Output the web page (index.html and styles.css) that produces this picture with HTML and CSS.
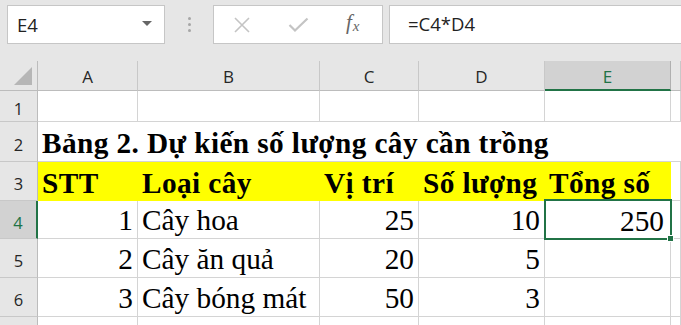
FILE: index.html
```html
<!DOCTYPE html>
<html>
<head>
    <meta http-equiv="Content-Type" content="text/html; charset=utf-8" />
    <title>Bảng 2</title>
    <link rel="stylesheet" href="styles.css">
</head>
<body>
<div class="fbar">
    <div class="namebox">
        <span class="name">E4</span>
        <span class="drop"></span>
    </div>
    <div class="dots"><i></i><i></i><i></i></div>
    <div class="btns">
        <svg class="ico" width="18" height="16" viewBox="0 0 18 16"><path d="M2 1L16 15M16 1L2 15" stroke="#c4c4c4" stroke-width="1.6" fill="none"/></svg>
        <svg class="ico" width="21" height="16" viewBox="0 0 21 16"><path d="M1.5 8L7 13.5L19.5 1.5" stroke="#c4c4c4" stroke-width="2.2" fill="none"/></svg>
        <span class="fx">f<sub>x</sub></span>
    </div>
    <div class="formula">=C4*D4</div>
</div>

<div class="sheet">
    <div class="corner"><span class="tri"></span></div>
    <div class="colh">A</div>
    <div class="colh">B</div>
    <div class="colh">C</div>
    <div class="colh">D</div>
    <div class="colh sel">E</div>
    <div class="colh"></div>

    <div class="rowh">1</div>
    <div class="c"></div><div class="c"></div><div class="c"></div><div class="c"></div><div class="c"></div><div class="c"></div>

    <div class="rowh">2</div>
    <div class="c title">Bảng 2. Dự kiến số lượng cây cần trồng</div>

    <div class="rowh">3</div>
    <div class="c y">STT</div>
    <div class="c y">Loại cây</div>
    <div class="c y">Vị trí</div>
    <div class="c y">Số lượng</div>
    <div class="c y">Tổng số</div>
    <div class="c"></div>

    <div class="rowh sel">4</div>
    <div class="c n">1</div>
    <div class="c">Cây hoa</div>
    <div class="c n">25</div>
    <div class="c n">10</div>
    <div class="c n active">250<span class="handle"></span></div>
    <div class="c"></div>

    <div class="rowh">5</div>
    <div class="c n">2</div>
    <div class="c">Cây ăn quả</div>
    <div class="c n">20</div>
    <div class="c n">5</div>
    <div class="c"></div>
    <div class="c"></div>

    <div class="rowh">6</div>
    <div class="c n">3</div>
    <div class="c">Cây bóng mát</div>
    <div class="c n">50</div>
    <div class="c n">3</div>
    <div class="c"></div>
    <div class="c"></div>

    <div class="rowh"></div>
    <div class="c"></div><div class="c"></div><div class="c"></div><div class="c"></div><div class="c"></div><div class="c"></div>
</div>
</body>
</html>
```

FILE: styles.css
```css
*{margin:0;padding:0;box-sizing:border-box;}
body{background:#e6e6e6;width:681px;height:325px;overflow:hidden;font-family:"Segoe UI","Open Sans","Liberation Sans",Arial,sans-serif;}

.fbar{
    height:61px;
    display:flex;
    align-items:flex-start;
    padding:5px 0 0 7px;
}
.namebox{
    width:158px;
    height:39px;
    background:#fff;
    border:1px solid #c6c6c6;
    display:flex;
    align-items:center;
    justify-content:space-between;
    padding:0 12px 0 9px;
}
.name{font-size:18.5px;color:#222;}
.drop{
    width:0;height:0;
    border-left:5px solid transparent;
    border-right:5px solid transparent;
    border-top:5px solid #666;
    margin-top:-3px;
}
.dots{
    width:48px;
    height:39px;
    display:flex;
    flex-direction:column;
    align-items:center;
    justify-content:center;
    gap:3px;
}
.dots i{display:block;width:3px;height:3px;border-radius:50%;background:#a6a6a6;}
.btns{
    width:170px;
    height:39px;
    background:#fff;
    border:1px solid #c6c6c6;
    display:flex;
    align-items:center;
    padding-left:19px;
}
.btns .ico{margin-right:37px;}
.btns .ico + .ico{margin-right:37px;}
.fx{
    font:italic 21px "Liberation Serif","Times New Roman",serif;
    color:#666;
    margin-top:-4px;
}
.fx sub{font-size:15px;vertical-align:-2px;margin-left:1px;}
.formula{
    flex:1;
    height:39px;
    margin-left:6px;
    background:#fff;
    border:1px solid #c6c6c6;
    border-right:none;
    font-size:18.5px;
    color:#222;
    line-height:36px;
    padding-left:18px;
}

.sheet{
    display:grid;
    grid-template-columns:38px 100px 182px 99px 126px 126px 10px;
    grid-template-rows:30px 31px 40px 39px 38px 39px 39px 20px;
    background:#fff;
}
.corner{
    background:#e6e6e6;
    border-right:1px solid #bcbcbc;
    border-bottom:1px solid #bcbcbc;
    position:relative;
}
.tri{
    position:absolute;
    right:5px;bottom:5px;
    width:0;height:0;
    border-left:18px solid transparent;
    border-bottom:18px solid #b6b6b6;
}
.colh{
    background:#e6e6e6;
    border-right:1px solid #c8c8c8;
    border-bottom:1px solid #bcbcbc;
    font-size:17px;
    color:#262626;
    display:flex;
    align-items:center;
    justify-content:center;
    padding-top:2px;
}
.colh.sel{
    background:#d2d2d2;
    color:#217346;
    border-bottom:2px solid #217346;
    border-right-color:#b0b0b0;
}
.rowh{
    background:#e6e6e6;
    border-right:1px solid #bcbcbc;
    border-bottom:1px solid #c8c8c8;
    font-size:16.5px;
    color:#262626;
    display:flex;
    align-items:center;
    justify-content:center;
    padding-top:5px;
}
.rowh.sel{
    background:#d2d2d2;
    color:#217346;
    border-right:2px solid #217346;
}
.c{
    border-right:1px solid #d4d4d4;
    border-bottom:1px solid #d4d4d4;
    font:29.3px/1 "Liberation Serif","Times New Roman",serif;
    color:#000;
    display:flex;
    align-items:flex-end;
    padding:0 4px 3px 4px;
    white-space:nowrap;
}
.c.n{justify-content:flex-end;}
.c.title{
    grid-column:2 / -1;
    font-weight:bold;
    letter-spacing:0.4px;
    border-right:none;
    overflow:visible;
}
.c.y{
    background:#ffff00;
    font-weight:bold;
    letter-spacing:0.4px;
    border-right:none;
    border-bottom:none;
}
.c.active{
    border:2px solid #217346;
    margin:-2px -1px -1px -1px;
    padding:0 6px 2px 4px;
    position:relative;
}
.handle{
    position:absolute;
    right:-4px;bottom:-4px;
    width:7px;height:7px;
    background:#217346;
    border:1px solid #fff;
}
```
